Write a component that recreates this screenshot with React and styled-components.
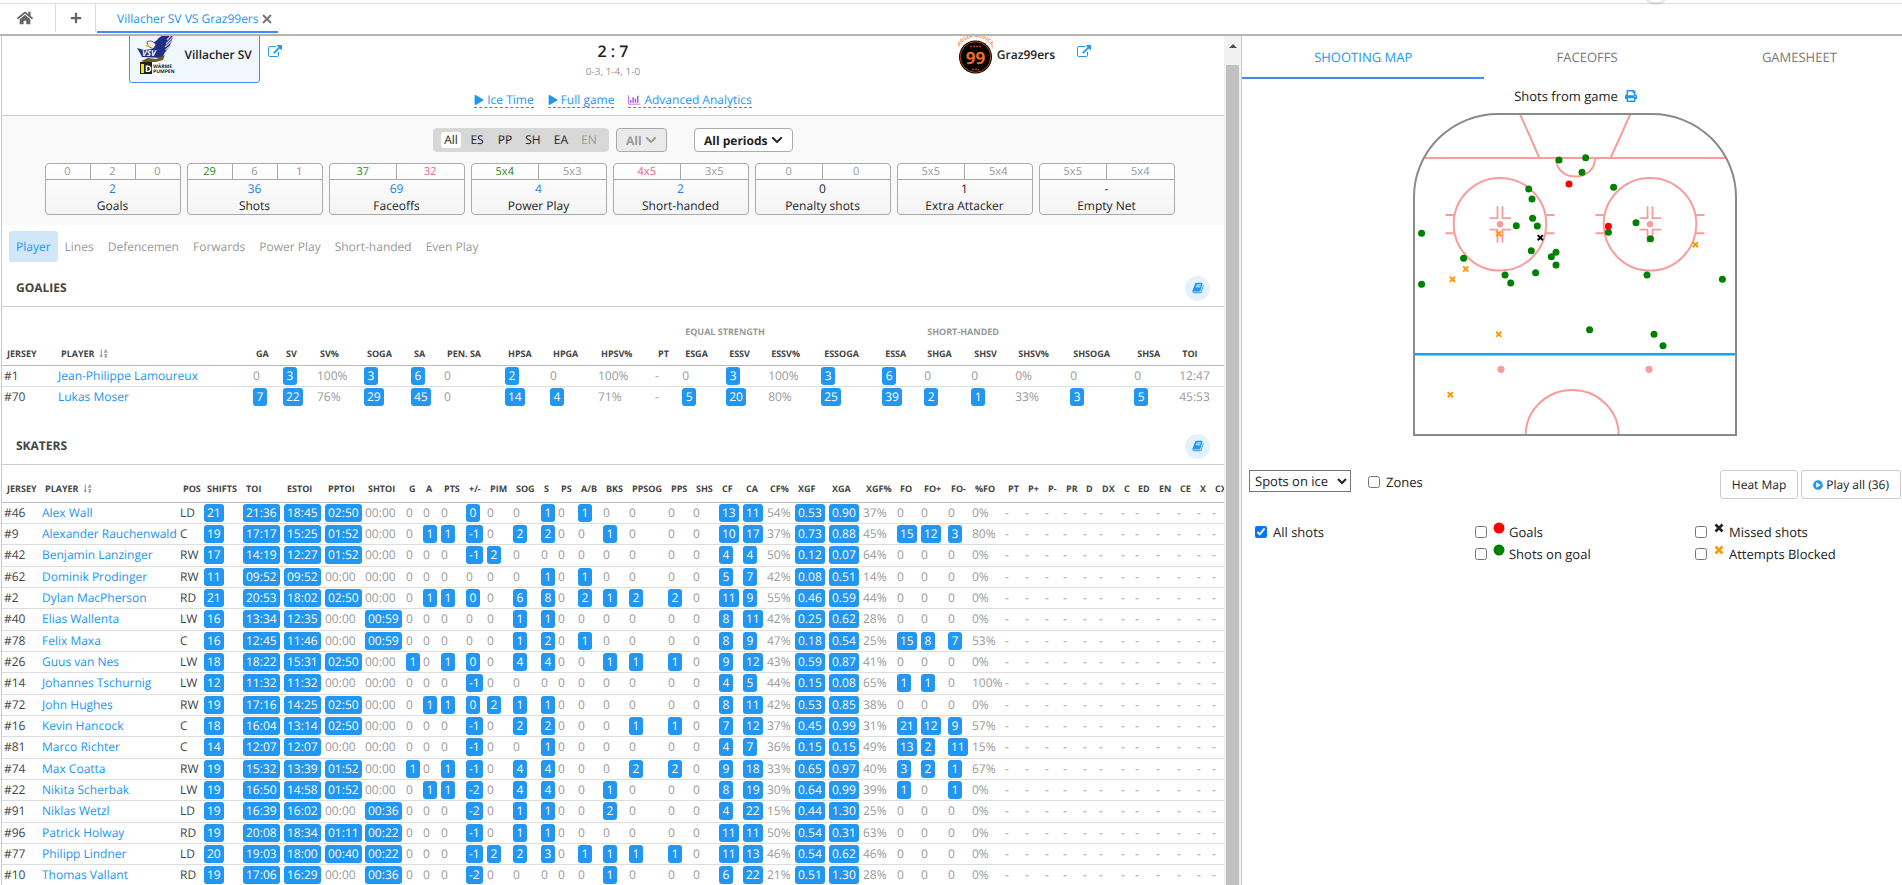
import React, { useState } from 'react';
import styled, { createGlobalStyle } from 'styled-components';
import {
  FaChevronDown,
  FaHome,
  FaPlay,
  FaPlayCircle,
  FaPlus,
  FaPrint,
  FaSortAlphaDown,
} from 'react-icons/fa';

const GlobalStyle = createGlobalStyle`
  * {
    box-sizing: border-box;
  }

  body {
    margin: 0;
    background: #fff;
    color: #222;
    font-family: 'Open Sans', sans-serif;
    font-size: 12px;
    line-height: 16px;
    text-rendering: geometricPrecision;
  }

  button, select, input {
    font-family: inherit;
    font-size: inherit;
    color: inherit;
    text-rendering: inherit;
  }

  a {
    color: #2196f3;
    text-decoration: none;
  }
`;

const Page = styled.div`
  height: 100vh;
  display: flex;
  flex-direction: column;
  overflow: hidden;
`;

const TopBar = styled.header`
  display: flex;
  flex: 0 0 33px;
  margin-top: 3px;
  border-top: 1px solid #ddd;
  border-bottom: 2px solid #b4b4b4;
`;

const TopButton = styled.button`
  display: flex;
  align-items: center;
  justify-content: center;
  width: ${(props) => props.$width}px;
  height: 28px;
  padding: 0 ${(props) => props.$right || 0}px 0 0;
  border: none;
  border-right: 1px solid #ddd;
  background: none;
  color: #666;
  font-size: ${(props) => props.$size}px;
  cursor: pointer;
`;

const GameTab = styled.div`
  display: flex;
  align-items: center;
  gap: 3px;
  margin-left: 1px;
  padding: 2px 6px 0 20px;
  height: 29px;
  border-bottom: 2px solid #448aff;
`;

const CloseButton = styled.button`
  display: flex;
  padding: 0;
  border: none;
  background: none;
  cursor: pointer;
`;

const FloatingKnob = styled.div`
  position: absolute;
  top: -21px;
  right: 234px;
  width: 24px;
  height: 24px;
  border-radius: 50%;
  background: #fff;
  box-shadow: 0 0 3px rgba(0, 0, 0, 0.4);
`;

const Columns = styled.main`
  flex: 1;
  min-height: 0;
  display: grid;
  grid-template-columns: 653fr 347fr;
`;

const GamePanel = styled.div`
  display: flex;
  min-width: 0;
  min-height: 0;
  margin-left: 1px;
  border-left: 1px solid #ccc;
  border-right: 1px solid #ccc;
`;

const GameContent = styled.div`
  flex: 1;
  min-width: 0;
  overflow: hidden;
`;

const ScrollTrack = styled.div`
  display: flex;
  flex-direction: column;
  align-items: center;
  flex: 0 0 17px;
  padding-top: 8px;
  background: #f1f1f1;
`;

const ScrollArrow = styled.div`
  border: 4px solid transparent;
  border-top-width: 0;
  border-bottom-color: #505050;
`;

const ScrollThumb = styled.div`
  flex: 1;
  width: 13px;
  margin-top: 17px;
  background: #c1c1c1;
`;

const Match = styled.section`
  display: grid;
  grid-template-columns: 1fr 1fr 1fr;
  margin-top: -20px;
  height: 67px;
`;

const Side = styled.div`
  display: flex;
  justify-content: center;
  gap: 8px;
`;

const TeamBox = styled.button`
  display: flex;
  align-items: center;
  gap: 4px;
  min-width: 119px;
  padding: 9px 7px 0;
  border: 1px solid ${(props) => (props.$active ? '#448aff' : 'transparent')};
  border-radius: 3px;
  background: ${(props) => (props.$active ? '#f0f7ff' : 'none')};
  font-weight: 600;
  cursor: pointer;
`;

const ExternalLink = styled.a`
  display: flex;
  height: 14px;
  margin-top: 29px;
`;

const ScoreBlock = styled.div`
  display: flex;
  flex-direction: column;
  align-items: center;
  padding-top: 5px;
`;

const Score = styled.div`
  font-size: 16px;
  font-weight: 600;
  line-height: 24px;
  margin-top: 2px;
`;

const PeriodScores = styled.div`
  color: #999;
  font-size: 10px;
`;

const MatchLinks = styled.nav`
  display: flex;
  justify-content: center;
  gap: 14px;
  height: 33px;
  padding-top: 9px;
  border-bottom: 1px solid #ccc;
`;

const MatchLink = styled.a`
  display: flex;
  align-items: center;
  gap: 3px;
  height: 16px;
  border-bottom: 1px dashed #2196f3;

  svg {
    font-size: 10px;
  }
`;

const Filters = styled.section`
  padding: 12px 0 10px;
  background: #f9f9f9;
`;

const FilterRow = styled.div`
  display: flex;
  justify-content: center;
  height: 24px;
  margin-bottom: 11px;
`;

const StrengthGroup = styled.div`
  display: flex;
  align-items: center;
  gap: 4px;
  padding: 0 8px;
  margin-right: 7px;
  border-radius: 4px;
  background: #d8d8d8;
`;

const StrengthButton = styled.button`
  height: 16px;
  padding: 0 3px;
  min-width: ${(props) => (props.$active ? 20 : 24)}px;
  border: none;
  border-radius: 3px;
  background: ${(props) => (props.$active ? '#fff' : 'none')};
  color: ${(props) => (props.disabled ? '#999' : '#222')};
  line-height: 16px;
`;

const SelectWrap = styled.div`
  display: flex;
  align-items: center;
  gap: 3px;
  padding: 0 9px;
  margin-left: ${(props) => (props.$spaced ? 27 : 0)}px;
  border: 1px solid #aaa;
  border-radius: 4px;
  background: ${(props) => (props.$muted ? '#eaeaea' : '#fff')};
  color: ${(props) => (props.$muted ? '#999' : '#222')};

  svg {
    font-size: 12px;
  }
`;

const PlainSelect = styled.select`
  appearance: none;
  padding: 0;
  border: none;
  background: none;
  font-weight: 700;
  opacity: 1;
`;

const StatCards = styled.div`
  display: flex;
  justify-content: center;
  gap: 6px;
  padding-right: 7px;
`;

const StatCard = styled.div`
  flex: 0 0 136px;
  height: 52px;
  border: 1px solid #aaa;
  border-radius: 4px;
  background: linear-gradient(#fff, #f4f4f4);
  text-align: center;
`;

const StatParts = styled.div`
  display: flex;
  height: 16px;
  border-bottom: 1px solid #aaa;
  font-size: 11px;
  line-height: 15px;
`;

const partColors = { good: '#1c8a1c', bad: '#f0627f', none: '#999' };

const StatPart = styled.span`
  flex: 1;
  color: ${(props) => partColors[props.$tone]};

  & + & {
    border-left: 1px solid #aaa;
  }
`;

const StatValue = styled.div`
  line-height: 18px;
  color: ${(props) => (props.$link ? '#2a7de1' : '#222')};
`;

const ViewTabs = styled.nav`
  display: flex;
  height: 31px;
  margin: 6px 0 0 7px;
`;

const ViewTab = styled.button`
  padding: 0 7px;
  border: none;
  border-radius: 3px;
  background: ${(props) => (props.$active ? '#d0e7f9' : 'none')};
  color: ${(props) => (props.$active ? '#2196f3' : '#999')};
  cursor: pointer;
`;

const SectionHead = styled.div`
  display: flex;
  align-items: center;
  justify-content: space-between;
  height: 45px;
  padding: 8px 14px 0;
  border-bottom: 1px solid #ccc;
`;

const SectionTitle = styled.h2`
  margin: 0;
  color: #444;
  font-size: 12px;
  font-weight: 700;
`;

const LegendButton = styled.button`
  display: flex;
  align-items: center;
  justify-content: center;
  width: 25px;
  height: 25px;
  padding: 0;
  border: none;
  border-radius: 50%;
  background: #e4f2fe;
  color: #2196f3;
`;

const StatsTable = styled.table`
  width: 100%;
  table-layout: fixed;
  border-collapse: collapse;
  margin-bottom: ${(props) => props.$after || 0}px;
  color: #999;
  white-space: nowrap;

  td {
    height: 21px;
    padding: 0 0 0 2px;
    border-top: 1px solid #ddd;
    line-height: 18px;
  }

  tr:nth-child(3n) td {
    height: 22px;
  }

  tbody tr:first-child td {
    border-top-color: #bbb;
  }
`;

const HeadCell = styled.th`
  height: ${(props) => props.$height}px;
  padding: ${(props) => props.$drop || 0}px 0 0 5px;
  color: ${(props) => (props.$group ? '#999' : '#444')};
  font-size: 9px;
  font-weight: 700;
  line-height: 12px;
  text-align: left;
  vertical-align: middle;

  svg {
    margin-left: 4px;
    color: #999;
    font-size: 9px;
    vertical-align: -1px;
  }
`;

const DarkCell = styled.td`
  color: #444;
`;

const Clip = styled.button`
  display: block;
  height: 18px;
  min-width: 14px;
  padding: 0 3px;
  border: none;
  border-radius: 3px;
  background: #2196f3;
  color: #fff;
  line-height: 18px;
  cursor: pointer;
`;

const MapPanel = styled.aside`
  min-width: 0;
  overflow: hidden;
  font-size: 13px;
`;

const MapTop = styled.div`
  margin-right: -7px;
`;

const MapTabs = styled.nav`
  display: flex;
  height: 43px;
`;

const MapTab = styled.button`
  flex: 1 1 auto;
  padding: 0;
  border: none;
  border-bottom: 2px solid ${(props) => (props.$active ? '#448aff' : 'transparent')};
  background: none;
  color: ${(props) => (props.$active ? '#2196f3' : '#777')};
  cursor: pointer;
`;

const MapTitle = styled.div`
  display: flex;
  align-items: center;
  justify-content: center;
  gap: 7px;
  height: 34px;

  svg {
    color: #2196f3;
    font-size: 12px;
  }
`;

const Rink = styled.svg`
  display: block;
  width: 324px;
  height: 323px;
  margin: 0 auto;
`;

const MapControls = styled.div`
  display: flex;
  align-items: flex-start;
  gap: 3px;
  margin-top: 34px;
  padding: 0 1px 0 7px;
`;

const SpotsSelect = styled.select`
  width: 102px;
  height: 22px;
  padding: 0 1px;
  border: 1px solid #767676;
  border-radius: 0;
  background: #fff;
`;

const CheckLabel = styled.label`
  display: flex;
  align-items: center;
  gap: 6px;
  height: 22px;
  white-space: nowrap;

  input {
    width: 12px;
    height: 12px;
    margin: 0;
  }
`;

const ZonesLabel = styled(CheckLabel)`
  margin: 1px auto 0 14px;
`;

const MapButton = styled.button`
  display: flex;
  align-items: center;
  gap: 3px;
  height: 29px;
  padding: 0 11px;
  border: 1px solid #ccc;
  border-radius: 3px;
  background: #fff;
  font-size: 12px;
  cursor: pointer;

  svg {
    color: #2196f3;
    font-size: 10px;
  }
`;

const ShotFilters = styled.div`
  display: grid;
  grid-template-columns: 1fr 1fr 1fr;
  margin-top: 22px;
`;

const FilterColumn = styled.div`
  display: flex;
  flex-direction: column;
  min-width: 0;
  padding-left: 13px;
`;

const ShotMark = styled.svg`
  width: 12px;
  height: 12px;
  margin: -8px -2px 0 0;
`;

const strengths = ['All', 'ES', 'PP', 'SH', 'EA', 'EN'];

const statCards = [
  { label: 'Goals', value: '2', link: true, parts: [['0'], ['2'], ['0']] },
  { label: 'Shots', value: '36', link: true, parts: [['29', 'good'], ['6'], ['1', 'bad']] },
  { label: 'Faceoffs', value: '69', link: true, parts: [['37', 'good'], ['32', 'bad']] },
  { label: 'Power Play', value: '4', link: true, parts: [['5x4', 'good'], ['5x3']] },
  { label: 'Short-handed', value: '2', link: true, parts: [['4x5', 'bad'], ['3x5']] },
  { label: 'Penalty shots', value: '0', parts: [['0'], ['0']] },
  { label: 'Extra Attacker', value: '1', parts: [['5x5'], ['5x4']] },
  { label: 'Empty Net', value: '-', parts: [['5x5'], ['5x4']] },
];

const views = ['Player', 'Lines', 'Defencemen', 'Forwards', 'Power Play', 'Short-handed', 'Even Play'];

const goalieColumns = [
  ['JERSEY', 54], ['PLAYER', 195], ['GA', 30], ['SV', 34], ['SV%', 47], ['SOGA', 47], ['SA', 33],
  ['PEN. SA', 61], ['HPSA', 45], ['HPGA', 48], ['HPSV%', 57], ['PT', 27], ['ESGA', 44], ['ESSV', 42],
  ['ESSV%', 53], ['ESSOGA', 61], ['ESSA', 42], ['SHGA', 47], ['SHSV', 44], ['SHSV%', 55],
  ['SHSOGA', 64], ['SHSA', 45], ['TOI', 47],
];

const goalies = [
  ['#1', 'Jean-Philippe Lamoureux', '0 3 100% 3 6 0 2 0 100% - 0 3 100% 3 6 0 0 0% 0 0 12:47'],
  ['#70', 'Lukas Moser', '7 22 76% 29 45 0 14 4 71% - 5 20 80% 25 39 2 1 33% 3 5 45:53'],
];

const skaterColumns = [
  ['JERSEY', 38], ['PLAYER', 138], ['POS', 24], ['SHIFTS', 39], ['TOI', 41], ['ESTOI', 41],
  ['PPTOI', 40], ['SHTOI', 41], ['G', 17], ['A', 18], ['PTS', 25], ['+/-', 21], ['PIM', 26],
  ['SOG', 28], ['S', 17], ['PS', 20], ['A/B', 25], ['BKS', 26], ['PPSOG', 39], ['PPS', 25],
  ['SHS', 26], ['CF', 24], ['CA', 24], ['CF%', 28], ['XGF', 34], ['XGA', 34], ['XGF%', 34],
  ['FO', 24], ['FO+', 27], ['FO-', 24], ['%FO', 33], ['PT', 20], ['P+', 20], ['P-', 18], ['PR', 20],
  ['D', 16], ['DX', 22], ['C', 14], ['ED', 21], ['EN', 21], ['CE', 20], ['X', 15], ['CX', 14],
];

// "0!" is a zero that still has clips behind it
const skaters = [
  ['#46', 'Alex Wall', 'LD 21 21:36 18:45 02:50 00:00 0 0 0 0! 0 0 1 0 1 0 0 0 0 13 11 54% 0.53 0.90 37% 0 0 0 0%'],
  ['#9', 'Alexander Rauchenwald', 'C 19 17:17 15:25 01:52 00:00 0 1 1 -1 0 2 2 0 0 1 0 0 0 10 17 37% 0.73 0.88 45% 15 12 3 80%'],
  ['#42', 'Benjamin Lanzinger', 'RW 17 14:19 12:27 01:52 00:00 0 0 0 -1 2 0 0 0 0 0 0 0 0 4 4 50% 0.12 0.07 64% 0 0 0 0%'],
  ['#62', 'Dominik Prodinger', 'RW 11 09:52 09:52 00:00 00:00 0 0 0 0 0 0 1 0 1 0 0 0 0 5 7 42% 0.08 0.51 14% 0 0 0 0%'],
  ['#2', 'Dylan MacPherson', 'RD 21 20:53 18:02 02:50 00:00 0 1 1 0! 0 6 8 0 2 1 2 2 0 11 9 55% 0.46 0.59 44% 0 0 0 0%'],
  ['#40', 'Elias Wallenta', 'LW 16 13:34 12:35 00:00 00:59 0 0 0 0 0 1 1 0 0 0 0 0 0 8 11 42% 0.25 0.62 28% 0 0 0 0%'],
  ['#78', 'Felix Maxa', 'C 16 12:45 11:46 00:00 00:59 0 0 0 0 0 1 2 0 1 0 0 0 0 8 9 47% 0.18 0.54 25% 15 8 7 53%'],
  ['#26', 'Guus van Nes', 'LW 18 18:22 15:31 02:50 00:00 1 0 1 0! 0 4 4 0 0 1 1 1 0 9 12 43% 0.59 0.87 41% 0 0 0 0%'],
  ['#14', 'Johannes Tschurnig', 'LW 12 11:32 11:32 00:00 00:00 0 0 0 -1 0 0 0 0 0 0 0 0 0 4 5 44% 0.15 0.08 65% 1 1 0 100%'],
  ['#72', 'John Hughes', 'RW 19 17:16 14:25 02:50 00:00 0 1 1 0! 2 1 1 0 0 0 0 0 0 8 11 42% 0.53 0.85 38% 0 0 0 0%'],
  ['#16', 'Kevin Hancock', 'C 18 16:04 13:14 02:50 00:00 0 0 0 -1 0 2 2 0 0 0 1 1 0 7 12 37% 0.45 0.99 31% 21 12 9 57%'],
  ['#81', 'Marco Richter', 'C 14 12:07 12:07 00:00 00:00 0 0 0 -1 0 0 1 0 0 0 0 0 0 4 7 36% 0.15 0.15 49% 13 2 11 15%'],
  ['#74', 'Max Coatta', 'RW 19 15:32 13:39 01:52 00:00 1 0 1 -1 0 4 4 0 0 0 2 2 0 9 18 33% 0.65 0.97 40% 3 2 1 67%'],
  ['#22', 'Nikita Scherbak', 'LW 19 16:50 14:58 01:52 00:00 0 1 1 -2 0 4 4 0 0 1 0 0 0 8 19 30% 0.64 0.99 39% 1 0 1 0%'],
  ['#91', 'Niklas Wetzl', 'LD 19 16:39 16:02 00:00 00:36 0 0 0 -2 0 1 1 0 0 2 0 0 0 4 22 15% 0.44 1.30 25% 0 0 0 0%'],
  ['#96', 'Patrick Holway', 'RD 19 20:08 18:34 01:11 00:22 0 0 0 -1 0 1 1 0 0 0 0 0 0 11 11 50% 0.54 0.31 63% 0 0 0 0%'],
  ['#77', 'Philipp Lindner', 'LD 20 19:03 18:00 00:40 00:22 0 0 0 -1 2 2 3 0 1 1 1 1 0 11 13 46% 0.54 0.62 46% 0 0 0 0%'],
  ['#10', 'Thomas Vallant', 'RD 19 17:06 16:29 00:00 00:36 0 0 0 -2 0 0 0 0 0 1 0 0 0 6 22 21% 0.51 1.30 28% 0 0 0 0%'],
];

const shotsOnGoal = [
  [146, 47], [172.7, 44.7], [169, 59.3], [115.7, 76], [119, 86], [200.6, 74.3], [119.6, 105.3],
  [103.3, 112.7], [124.3, 113], [223, 109.7], [195.4, 119.3], [237.4, 125.7], [8.6, 120.3],
  [118.3, 137.7], [143, 139.3], [138.4, 143.7], [143, 152], [50.6, 145.3], [122.6, 159.7],
  [92, 162], [97.7, 170], [8.6, 171.3], [234, 162], [309.4, 166.3], [176.6, 216.7],
  [241, 221.3], [250, 232.7],
];
const goals = [[156, 71], [195.4, 113.3]];
const missed = [[127.3, 124.7]];
const blocked = [[85.7, 120.7], [282.4, 131.7], [52.7, 156], [39.4, 166.3], [85.7, 221.3], [37.3, 281.7]];

const OpenIcon = () => (
  <svg width="14" height="14" viewBox="0 0 1792 1792" fill="currentColor" aria-hidden="true">
    <path d="M1408 928v320q0 119-84.500 203.500t-203.500 84.500h-832q-119 0-203.500-84.500t-84.500-203.500v-832q0-119 84.500-203.500t203.500-84.500h704q14 0 23 9t9 23v64q0 14-9 23t-23 9h-704q-66 0-113 47t-47 113v832q0 66 47 113t113 47h832q66 0 113-47t47-113v-320q0-14 9-23t23-9h64q14 0 23 9t9 23zm384-864v512q0 26-19 45t-45 19-45-19l-176-176-652 652q-10 10-23 10t-23-10l-114-114q-10-10-10-23t10-23l652-652-176-176q-19-19-19-45t19-45 45-19h512q26 0 45 19t19 45z" />
  </svg>
);

const BookIcon = () => (
  <svg width="12" height="12" viewBox="0 0 1792 1792" fill="currentColor" aria-hidden="true">
    <path d="M1703 478q40 57 18 129l-275 906q-19 64-76.500 107.500t-122.500 43.500h-923q-77 0-148.500-53.500t-99.500-131.500q-24-67-2-127 0-4 3-27t4-37q1-8-3-21.500t-3-19.500q2-11 8-21t16.500-23.500 16.500-23.500q23-38 45-91.500t30-91.500q3-10 .5-30t-.5-28q3-11 17-28t17-23q21-36 42-92t25-90q1-9-2.500-32t.5-28q4-13 22-30.500t22-22.500q19-26 42.500-84.500t27.500-96.500q1-8-3-25.500t-2-26.500q2-8 9-18t18-23 17-21q8-12 16.500-30.500t15-35 16-36 19.500-32 26.500-23.500 36-11.500 47.500 5.500l-1 3q38-9 51-9h761q74 0 114 56t18 130l-274 906q-36 119-71.500 153.500t-128.500 34.500h-869q-27 0-38 15-11 16-1 43 24 70 144 70h923q29 0 56-15.500t35-41.500l300-987q7-22 5-57 38 15 59 43zm-1064 2q-4 13 2 22.500t20 9.500h608q13 0 25.500-9.500t16.500-22.500l21-64q4-13-2-22.500t-20-9.500h-608q-13 0-25.500 9.500t-16.500 22.500zm-83 256q-4 13 2 22.500t20 9.500h608q13 0 25.500-9.500t16.500-22.500l21-64q4-13-2-22.500t-20-9.500h-608q-13 0-25.500 9.500t-16.500 22.500z" />
  </svg>
);

const ChartIcon = () => (
  <svg width="13" height="12" viewBox="0 0 14 12" aria-hidden="true">
    <path d="M0.500 1V10.500H13.500" fill="none" stroke="#c06be6" />
    <path d="M3 6V9M5.500 3V9M8 4.500V9M10.500 1.500V9" stroke="#8f5be8" strokeWidth="1.500" />
  </svg>
);

const Cross = ({ x, y, color, size = 2.6 }) => (
  <path
    d={`M${x - size} ${y - size}L${x + size} ${y + size}M${x + size} ${y - size}L${x - size} ${y + size}`}
    stroke={color}
    strokeWidth={size * 0.75}
    fill="none"
  />
);

const FaceoffCircle = ({ x, y }) => (
  <g transform={`translate(${x} ${y})`} stroke="#f99c9c" strokeWidth="2" fill="none">
    <circle r="46.3" />
    <path d="M-54.5 -9.3h8.500M-54.5 9h8.500M46 -9.3h8.500M46 9h8.500" />
    <path d="M-10.5 -6H-2.5V-18M11 -6H2.500V-18M-10.5 5.500H-2.5V18.500M11 5.500H2.500V18.500" strokeWidth="1.8" />
    <circle r="3.2" fill="#f99c9c" stroke="none" />
  </g>
);

const ShotRink = () => (
  <Rink viewBox="0 0 324 323" role="img" aria-label="Shots from game">
    <g stroke="#f99c9c" strokeWidth="2" fill="none">
      <path d="M12 45H313M107 1L126.4 45M217.4 1L197.6 45" />
      <path d="M143 45C143 57 152 63.5 162.5 63.5S182 57 182 45" />
      <path d="M112.7 322A46.5 45 0 0 1 205.7 322" />
    </g>
    <FaceoffCircle x={87} y={111.2} />
    <FaceoffCircle x={237} y={111.2} />
    <circle cx="88" cy="256.3" r="3.6" fill="#f99c9c" />
    <circle cx="236" cy="256.3" r="3.6" fill="#f99c9c" />
    <path d="M1 241.3H323" stroke="#1ba1f2" strokeWidth="2.6" />
    <path d="M1 322V84A84 83 0 0 1 85 1H239A84 83 0 0 1 323 84V322Z" fill="none" stroke="#8a8a8a" strokeWidth="2" />
    {shotsOnGoal.map(([x, y]) => <circle key={`${x}-${y}`} cx={x} cy={y} r="3.5" fill="green" />)}
    {goals.map(([x, y]) => <circle key={`${x}-${y}`} cx={x} cy={y} r="3.5" fill="red" />)}
    {missed.map(([x, y]) => <Cross key={`${x}-${y}`} x={x} y={y} color="#000" />)}
    {blocked.map(([x, y]) => <Cross key={`${x}-${y}`} x={x} y={y} color="#ff9800" />)}
  </Rink>
);

const VillachLogo = () => (
  <svg width="43" height="42" viewBox="0 0 43 42" aria-hidden="true">
    <path d="M36 0C35 9 33 15 27 20L18 20C14 17 16 12 15 9C19 10 20 6 23 4C27 1 31 2 36 0Z" fill="#1f2f86" />
    <path d="M36 0L30 7M36 4L29 11M35 8L28 14M33 13L27 18" stroke="#b9bdc8" strokeWidth="1.4" />
    <path d="M10 9C13 7 17 8 19 12L16 16L11 13Z" fill="#ececec" stroke="#333" strokeWidth="0.7" />
    <path d="M11 11L8 13L12 14Z" fill="#f4b400" />
    <path d="M0 15L7 17L24 15L29 17L25 25L5 24L3 20Z" fill="#1f2f86" />
    <path d="M4 28L11 25L19 26L28 22L26 27L19 29L15 32Z" fill="#6b5a2c" />
    <text x="5" y="23" fontSize="8" fontWeight="700" fontStyle="italic" fill="#fff">VSV</text>
    <rect x="3" y="29" width="32" height="12" fill="#fff" />
    <rect x="3" y="29" width="12" height="12" fill="#222" />
    <rect x="4" y="31" width="3" height="9" fill="#f5e400" />
    <text x="8" y="39" fontSize="9" fontWeight="700" fill="#fff">D</text>
    <text x="16" y="35" fontSize="5" fontWeight="700" fill="#222">WÄRME</text>
    <text x="16" y="40" fontSize="5" fontWeight="700" fill="#222">PUMPEN</text>
  </svg>
);

const GrazLogo = () => (
  <svg width="35" height="42" viewBox="0 0 35 42" aria-hidden="true">
    <path id="graz-arc" d="M1 14A18 16 0 0 1 34 14" fill="none" />
    <circle cx="17.5" cy="24" r="16.5" fill="#000" />
    <circle cx="17.5" cy="24" r="15.3" fill="none" stroke="#b3470f" strokeWidth="1" />
    <text fontSize="5" fontWeight="700" fill="#f58a50">
      <textPath href="#graz-arc" startOffset="0">MOSER MEDICAL</textPath>
    </text>
    <text x="17.5" y="30.5" fontSize="17" fontWeight="700" textAnchor="middle" fill="#f26a21">99</text>
    <path d="M12 13.5h11M14 36.5h7" stroke="#b3470f" strokeWidth="1.5" strokeDasharray="2 1" />
  </svg>
);

const hasClips = (value) => /!|[1-9]/.test(value) && !value.includes('%');

const StatCell = ({ value, plain }) => (
  <td>{!plain && hasClips(value) ? <Clip>{value.replace('!', '')}</Clip> : value}</td>
);

const PlayerTable = ({ columns, rows, groups, headHeight, headDrop, after }) => (
  <StatsTable $after={after}>
    <colgroup>
      {columns.map(([name, width]) => <col key={name} width={width} />)}
    </colgroup>
    <thead>
      {groups}
      <tr>
        {columns.map(([name]) => (
          <HeadCell key={name} $height={headHeight} $drop={headDrop}>
            {name}
            {name === 'PLAYER' && <FaSortAlphaDown />}
          </HeadCell>
        ))}
      </tr>
    </thead>
    <tbody>
      {rows.map(([jersey, player, line]) => {
        const values = line.split(' ');
        const hasPosition = columns[2][0] === 'POS';
        const stats = hasPosition ? values.slice(1) : values;
        const offset = hasPosition ? 3 : 2;
        return (
          <tr key={jersey}>
            <DarkCell>{jersey}</DarkCell>
            <td><a href="#player">{player}</a></td>
            {hasPosition && <DarkCell>{values[0]}</DarkCell>}
            {columns.slice(offset).map(([name], i) => (
              <StatCell key={name} value={stats[i] || '-'} plain={!hasPosition && name === 'TOI'} />
            ))}
          </tr>
        );
      })}
    </tbody>
  </StatsTable>
);

const goalieGroups = (
  <tr>
    <HeadCell colSpan={12} $height={36} />
    <HeadCell colSpan={5} $height={36} $drop={14} $group>EQUAL STRENGTH</HeadCell>
    <HeadCell colSpan={6} $height={36} $drop={14} $group>SHORT-HANDED</HeadCell>
  </tr>
);

const App = () => {
  const [strength, setStrength] = useState('All');
  const [view, setView] = useState('Player');
  const [mapTab, setMapTab] = useState('SHOOTING MAP');

  return (
    <Page>
      <GlobalStyle />
      <TopBar>
        <TopButton $width={56} $size={16} $right={6} aria-label="Home"><FaHome /></TopButton>
        <TopButton $width={40} $size={12} aria-label="New tab"><FaPlus /></TopButton>
        <GameTab>
          <a href="#game">Villacher SV VS Graz99ers</a>
          <CloseButton aria-label="Close tab">
            <svg width="10" height="10" viewBox="0 0 10 10">
              <path d="M1 1L9 9M9 1L1 9" stroke="#777" strokeWidth="2" />
            </svg>
          </CloseButton>
        </GameTab>
        <FloatingKnob />
      </TopBar>
      <Columns>
        <GamePanel>
          <GameContent>
            <Match>
              <Side>
                <TeamBox $active><VillachLogo />Villacher SV</TeamBox>
                <ExternalLink href="#villacher" aria-label="Open Villacher SV"><OpenIcon /></ExternalLink>
              </Side>
              <ScoreBlock>
                <div><a href="#date">Friday</a>, 19:15</div>
                <Score>2 : 7</Score>
                <PeriodScores>0-3, 1-4, 1-0</PeriodScores>
              </ScoreBlock>
              <Side>
                <TeamBox><GrazLogo />Graz99ers</TeamBox>
                <ExternalLink href="#graz" aria-label="Open Graz99ers"><OpenIcon /></ExternalLink>
              </Side>
            </Match>
            <MatchLinks>
              <MatchLink href="#ice-time"><FaPlay />Ice Time</MatchLink>
              <MatchLink href="#full-game"><FaPlay />Full game</MatchLink>
              <MatchLink href="#analytics"><ChartIcon />Advanced Analytics</MatchLink>
            </MatchLinks>
            <Filters>
              <FilterRow>
                <StrengthGroup>
                  {strengths.map((name) => (
                    <StrengthButton
                      key={name}
                      $active={name === strength}
                      disabled={name === 'EN'}
                      onClick={() => setStrength(name)}
                    >
                      {name}
                    </StrengthButton>
                  ))}
                </StrengthGroup>
                <SelectWrap $muted>
                  <PlainSelect disabled aria-label="Situation"><option>All</option></PlainSelect>
                  <FaChevronDown />
                </SelectWrap>
                <SelectWrap $spaced>
                  <PlainSelect aria-label="Periods"><option>All periods</option></PlainSelect>
                  <FaChevronDown />
                </SelectWrap>
              </FilterRow>
              <StatCards>
                {statCards.map((card) => (
                  <StatCard key={card.label}>
                    <StatParts>
                      {card.parts.map(([text, tone], i) => (
                        <StatPart key={i} $tone={tone || 'none'}>{text}</StatPart>
                      ))}
                    </StatParts>
                    <StatValue $link={card.link}>{card.value}</StatValue>
                    <div>{card.label}</div>
                  </StatCard>
                ))}
              </StatCards>
            </Filters>
            <ViewTabs>
              {views.map((name) => (
                <ViewTab key={name} $active={name === view} onClick={() => setView(name)}>{name}</ViewTab>
              ))}
            </ViewTabs>
            <SectionHead>
              <SectionTitle>GOALIES</SectionTitle>
              <LegendButton aria-label="Goalies legend"><BookIcon /></LegendButton>
            </SectionHead>
            <PlayerTable columns={goalieColumns} rows={goalies} groups={goalieGroups} headHeight={22} after={13} />
            <SectionHead>
              <SectionTitle>SKATERS</SectionTitle>
              <LegendButton aria-label="Skaters legend"><BookIcon /></LegendButton>
            </SectionHead>
            <PlayerTable columns={skaterColumns} rows={skaters} headHeight={37} headDrop={12} />
          </GameContent>
          <ScrollTrack aria-hidden="true">
            <ScrollArrow />
            <ScrollThumb />
          </ScrollTrack>
        </GamePanel>
        <MapPanel>
          <MapTop>
            <MapTabs>
              {['SHOOTING MAP', 'FACEOFFS', 'GAMESHEET'].map((name) => (
                <MapTab key={name} $active={name === mapTab} onClick={() => setMapTab(name)}>{name}</MapTab>
              ))}
            </MapTabs>
            <MapTitle>Shots from game <FaPrint /></MapTitle>
            <ShotRink />
          </MapTop>
          <MapControls>
            <SpotsSelect aria-label="Map type"><option>Spots on ice</option></SpotsSelect>
            <ZonesLabel><input type="checkbox" />Zones</ZonesLabel>
            <MapButton>Heat Map</MapButton>
            <MapButton><FaPlayCircle />Play all (36)</MapButton>
          </MapControls>
          <ShotFilters>
            <FilterColumn>
              <CheckLabel><input type="checkbox" defaultChecked />All shots</CheckLabel>
            </FilterColumn>
            <FilterColumn>
              <CheckLabel>
                <input type="checkbox" />
                <ShotMark viewBox="0 0 12 12"><circle cx="6" cy="6" r="5.5" fill="red" /></ShotMark>
                Goals
              </CheckLabel>
              <CheckLabel>
                <input type="checkbox" />
                <ShotMark viewBox="0 0 12 12"><circle cx="6" cy="6" r="5.5" fill="green" /></ShotMark>
                Shots on goal
              </CheckLabel>
            </FilterColumn>
            <FilterColumn>
              <CheckLabel>
                <input type="checkbox" />
                <ShotMark viewBox="0 0 12 12"><Cross x={6} y={6} color="#222" size={3.5} /></ShotMark>
                Missed shots
              </CheckLabel>
              <CheckLabel>
                <input type="checkbox" />
                <ShotMark viewBox="0 0 12 12"><Cross x={6} y={6} color="#ff9800" size={3.5} /></ShotMark>
                Attempts Blocked
              </CheckLabel>
            </FilterColumn>
          </ShotFilters>
        </MapPanel>
      </Columns>
    </Page>
  );
};

export default App;
